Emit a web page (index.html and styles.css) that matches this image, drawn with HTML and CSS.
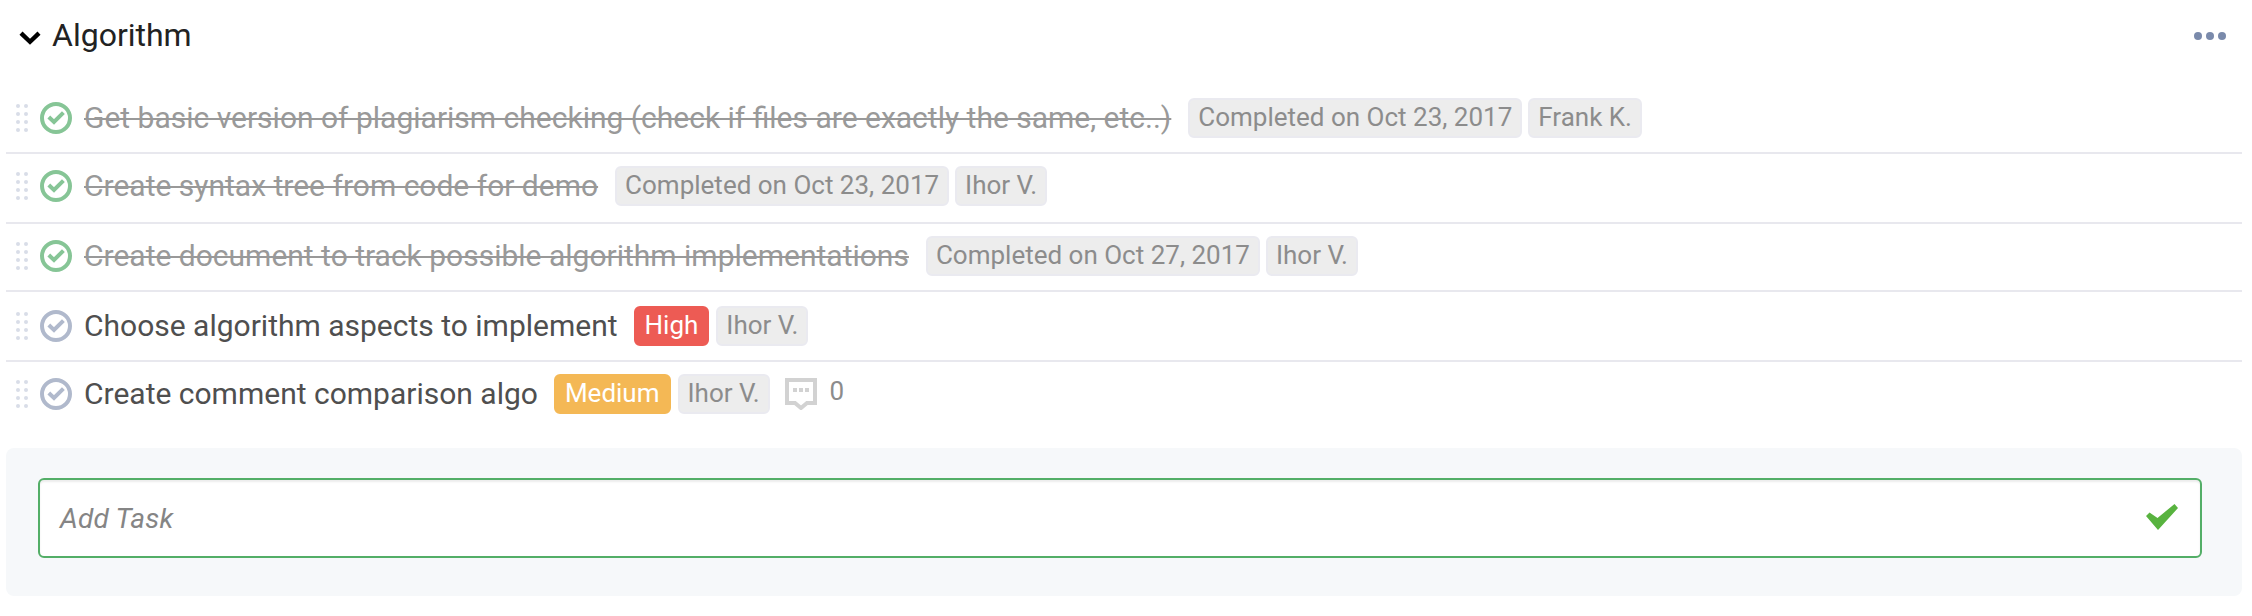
FILE: index.html
```html
<!DOCTYPE html>
<html lang="en">
<head>
<meta charset="utf-8">
<title>Algorithm</title>
<link rel="stylesheet" href="styles.css">
</head>
<body>
<svg class="defs" width="0" height="0" aria-hidden="true">
  <symbol id="grip" viewBox="0 0 12 28">
    <circle cx="2" cy="2" r="2"/><circle cx="10" cy="2" r="2"/>
    <circle cx="2" cy="10" r="2"/><circle cx="10" cy="10" r="2"/>
    <circle cx="2" cy="18" r="2"/><circle cx="10" cy="18" r="2"/>
    <circle cx="2" cy="26" r="2"/><circle cx="10" cy="26" r="2"/>
  </symbol>
  <symbol id="check" viewBox="0 0 32 32">
    <circle cx="16" cy="16" r="14" fill="none" stroke="currentColor" stroke-width="4"/>
    <path d="M8.8 15 14 20 23.4 10.6" fill="none" stroke="currentColor" stroke-width="4"/>
  </symbol>
</svg>
<section class="list">
  <header class="head">
    <svg class="chevron" viewBox="0 0 22 14"><path d="M2 2.2 11 10.8 20 2.2" fill="none" stroke="#000" stroke-width="4.4"/></svg>
    <h1 class="heading">Algorithm</h1>
    <svg class="more" viewBox="0 0 32 8"><circle cx="4" cy="4" r="4"/><circle cx="16" cy="4" r="4"/><circle cx="28" cy="4" r="4"/></svg>
  </header>
  <div class="task done">
    <svg class="grip"><use href="#grip"/></svg><svg class="check"><use href="#check"/></svg>
    <span class="title">Get basic version of plagiarism checking (check if files are exactly the same, etc..)</span>
    <span class="tag">Completed on Oct 23, 2017</span><span class="tag">Frank K.</span>
  </div>
  <div class="task done up">
    <svg class="grip"><use href="#grip"/></svg><svg class="check"><use href="#check"/></svg>
    <span class="title">Create syntax tree from code for demo</span>
    <span class="tag">Completed on Oct 23, 2017</span><span class="tag">Ihor V.</span>
  </div>
  <div class="task done up short">
    <svg class="grip"><use href="#grip"/></svg><svg class="check"><use href="#check"/></svg>
    <span class="title">Create document to track possible algorithm implementations</span>
    <span class="tag">Completed on Oct 27, 2017</span><span class="tag">Ihor V.</span>
  </div>
  <div class="task">
    <svg class="grip"><use href="#grip"/></svg><svg class="check"><use href="#check"/></svg>
    <span class="title">Choose algorithm aspects to implement</span>
    <span class="tag priority high">High</span><span class="tag">Ihor V.</span>
  </div>
  <div class="task up last">
    <svg class="grip"><use href="#grip"/></svg><svg class="check"><use href="#check"/></svg>
    <span class="title">Create comment comparison algo</span>
    <span class="tag priority medium">Medium</span><span class="tag">Ihor V.</span>
    <svg class="comment" viewBox="0 0 32 32"><path d="M2 2H30V25H22L16 30 10 25H2Z" fill="none" stroke="#d2d2d2" stroke-width="4"/><path d="M8 10h4v4H8zM14 10h4v4h-4zM20 10h4v4h-4z" fill="#d2d2d2"/></svg>
    <span class="count">0</span>
  </div>
  <div class="add">
    <div class="field">
      <span class="placeholder">Add Task</span>
      <svg class="submit" viewBox="0 0 34 28"><path d="M1 13 4.5 9.5 12.5 15 29.5 1 33 5 13 27Z" fill="#58b33f"/></svg>
    </div>
  </div>
</section>
</body>
</html>
```
FILE: styles.css
```css
* { box-sizing: border-box; }
body { margin: 0; background: #fff; font-family: Roboto, sans-serif; }
svg { flex: none; display: block; }
.defs { position: absolute; }
.list { padding: 0 10px 0 6px; }
.head { display: flex; align-items: center; height: 72px; padding: 0 16px 0 13px; margin-bottom: 12px; }
.chevron { width: 22px; height: 14px; margin-top: 3px; }
.heading { margin: 0 0 2px 11px; font-size: 32px; font-weight: 400; color: #222; }
.more { width: 32px; height: 8px; margin-left: auto; fill: #7a8aab; }
.task { display: flex; align-items: flex-start; height: 70px; padding: 14px 0 0 10px; border-bottom: 2px solid #e8e8ee; color: #4f4f4f; }
.up { padding-top: 12px; }
.short { height: 68px; }
.last { height: 86px; border: 0; }
.grip { width: 12px; height: 28px; margin-top: 6px; fill: #d9dde8; }
.check { width: 32px; height: 32px; margin: 4px 12px 0; color: #b0b9cc; }
.done .check { color: #86c596; }
.title { font-size: 30px; line-height: 40px; margin-right: 17px; white-space: nowrap; }
.done .title { color: #999; text-decoration: line-through; text-decoration-thickness: 2px; }
.tag { height: 40px; padding: 0 8px; margin-right: 6px; border: 2px solid #eaeaf0; border-radius: 6px; background: #ededed; color: #8c8c8c; font-size: 26px; line-height: 34px; white-space: nowrap; }
.priority { margin-left: -1px; margin-right: 7px; padding: 0 9px; color: #fff; }
.high { background: #ed5b54; border-color: #ed5b54; }
.medium { background: #f4b855; border-color: #f4b855; }
.comment { width: 32px; height: 32px; margin: 4px 13px 0 9px; }
.count { font-size: 26px; line-height: 34px; color: #8c8c8c; }
.add { height: 148px; padding: 30px 40px 40px 32px; border-radius: 8px; background: #f6f8fa; }
.field { display: flex; align-items: center; height: 80px; padding: 0 21px 0 20px; border: 2px solid #53ae67; border-radius: 6px; background: #fff; box-shadow: inset 0 2px 2px rgba(0,0,0,.08); }
.placeholder { font-size: 28px; font-style: italic; letter-spacing: .2px; color: #858585; }
.submit { width: 34px; height: 28px; margin: 0 0 2px auto; }
```
